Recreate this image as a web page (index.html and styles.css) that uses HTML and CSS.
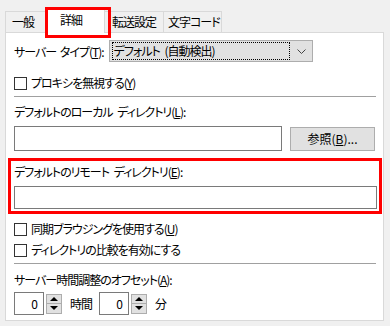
FILE: index.html
```html
<!DOCTYPE html>
<html lang="ja">
<head>
  <meta charset="UTF-8" />
  <title>詳細設定</title>
  <link rel="stylesheet" href="styles.css">
</head>
<body>
  <div class="tabs">
    <div class="tab tab-first">一般</div>
    <div class="tab tab-active">詳細</div>
    <div class="tab">転送設定</div>
    <div class="tab tab-code">文字コード</div>
  </div>

  <div class="panel">
    <div class="row row-type">
      <span class="label">サーバー タイプ(<u>T</u>):</span>
      <div class="select">
        <span class="select-text">デフォルト (自動検出)</span>
        <svg class="chevron" width="9" height="5" viewBox="0 0 9 5"><path d="M0.5 0.5 L4.5 4.5 L8.5 0.5" fill="none" stroke="#444" stroke-width="1"/></svg>
      </div>
    </div>

    <label class="check check-proxy"><span class="box"></span>プロキシを無視する(<u>Y</u>)</label>

    <div class="sep sep-first"></div>

    <div class="label line local-label">デフォルトのローカル ディレクトリ(<u>L</u>):</div>
    <div class="row row-local">
      <div class="input input-local"></div>
      <div class="button">参照(<u>B</u>)...</div>
    </div>

    <div class="marked">
      <div class="label line">デフォルトのリモート ディレクトリ(<u>E</u>):</div>
      <div class="input input-remote"></div>
    </div>

    <label class="check check-sync"><span class="box"></span>同期ブラウジングを使用する(<u>U</u>)</label>
    <label class="check check-compare"><span class="box"></span>ディレクトリの比較を有効にする</label>

    <div class="sep sep-second"></div>

    <div class="label line offset-label">サーバー時間調整のオフセット(<u>A</u>):</div>
    <div class="row row-offset">
      <div class="num">0</div>
      <div class="spin">
        <div class="spin-btn"><span class="tri-up"></span></div>
        <div class="spin-btn"><span class="tri-down"></span></div>
      </div>
      <span class="unit unit-hour">時間</span>
      <div class="num">0</div>
      <div class="spin">
        <div class="spin-btn"><span class="tri-up"></span></div>
        <div class="spin-btn"><span class="tri-down"></span></div>
      </div>
      <span class="unit">分</span>
    </div>
  </div>
</body>
</html>
```

FILE: styles.css
```css
body {
  margin: 0;
  background: #f0f0f0;
  font-family: "Noto Sans CJK JP", "Noto Sans", sans-serif;
  font-size: 12px;
  font-feature-settings: "palt";
  letter-spacing: -1px;
  word-spacing: 3px;
  color: #000;
  width: 390px;
  height: 326px;
  overflow: hidden;
}

u {
  text-decoration: underline;
  text-underline-offset: 1px;
}

/* tabs */
.tabs {
  display: flex;
  align-items: flex-end;
  height: 32px;
  padding-left: 5px;
  position: relative;
  z-index: 2;
}

.tab {
  height: 20px;
  line-height: 19px;
  padding: 0 7px 0 7px;
  border: 1px solid #d9d9d9;
  border-bottom: none;
  background: #f0f0f0;
  margin-left: -1px;
  white-space: nowrap;
}

.tab-first {
  margin-left: 0;
  width: 25px;
  padding: 0 8px 0 6px;
}

.tab-active {
  position: relative;
  height: 24px;
  line-height: 22px;
  margin-bottom: -1px;
  width: 26px;
  padding: 0 18px 0 14px;
  background: #fff;
  border-color: #d9d9d9;
}

.tab-code {
  width: 50px;
  padding: 0 3px 0 4px;
}

/* red annotation over the active tab */
.tab-active::after {
  content: "";
  position: absolute;
  left: -1px;
  top: -2px;
  width: 60px;
  height: 25px;
  border: 3px solid #ff0000;
}

.panel {
  margin: 0 6px 0 5px;
  height: 289px;
  background: #fff;
  border: 1px solid #d9d9d9;
  padding: 0 6px 0 8px;
  box-sizing: border-box;
  position: relative;
  z-index: 1;
}

.row {
  display: flex;
  align-items: center;
}

.line {
  height: 16px;
  line-height: 16px;
}

.row-type {
  margin-top: 7px;
  height: 22px;
}

.row-type .label {
  flex-shrink: 0;
  white-space: nowrap;
  word-spacing: 2px;
  margin-right: 5px;
}

.select {
  flex: 1;
  margin-right: 64px;
  height: 22px;
  box-sizing: border-box;
  border: 1px solid #adadad;
  background: #e1e1e1;
  display: flex;
  align-items: center;
  padding: 2px;
}

.select-text {
  flex: 1;
  height: 16px;
  line-height: 15px;
  border: 1px dotted #000;
  padding-left: 1px;
  margin-right: 7px;
  white-space: nowrap;
}

.chevron {
  margin-right: 4px;
}

/* checkboxes */
.check {
  display: flex;
  align-items: center;
  height: 16px;
  line-height: 16px;
}

.box {
  width: 11px;
  height: 11px;
  border: 1px solid #333;
  background: #fff;
  margin-right: 4px;
}

.check-proxy {
  margin-top: 13px;
}

.check-sync {
  margin-top: 7px;
}

.check-compare {
  margin-top: 5px;
}

.sep {
  height: 1px;
  background: #a0a0a0;
  margin-right: 1px;
}

.sep-first {
  margin-top: 5px;
}

.sep-second {
  margin-top: 5px;
}

.local-label {
  margin-top: 7px;
}

.row-local {
  margin-top: 6px;
  justify-content: space-between;
  align-items: flex-start;
}

.input {
  border: 1px solid #7a7a7a;
  background: #fff;
  box-sizing: border-box;
}

.input-local {
  width: 268px;
  height: 25px;
}

.button {
  width: 85px;
  height: 24px;
  margin-top: 1px;
  margin-right: 2px;
  box-sizing: border-box;
  border: 1px solid #adadad;
  background: #e1e1e1;
  text-align: center;
  line-height: 22px;
  letter-spacing: 0;
}

/* red annotation around the remote directory field */
.marked {
  margin: 7px -5px 0 -6px;
  border: 3px solid #ff0000;
  padding: 3px 2px 2px 3px;
}

.input-remote {
  margin-top: 6px;
  height: 23px;
}

.offset-label {
  margin-top: 8px;
}

.row-offset {
  margin-top: 4px;
  height: 23px;
}

.num {
  width: 30px;
  height: 23px;
  box-sizing: border-box;
  border: 1px solid #7a7a7a;
  text-align: right;
  line-height: 21px;
  padding-right: 5px;
  letter-spacing: 0;
}

.spin {
  margin-left: 2px;
  width: 16px;
  display: flex;
  flex-direction: column;
}

.spin-btn {
  height: 10px;
  box-sizing: border-box;
  border: 1px solid #adadad;
  background: #e1e1e1;
  display: flex;
  align-items: center;
  justify-content: center;
}

.spin-btn + .spin-btn {
  border-top: none;
}

.tri-up {
  width: 0;
  height: 0;
  border-left: 4px solid transparent;
  border-right: 4px solid transparent;
  border-bottom: 4px solid #000;
}

.tri-down {
  width: 0;
  height: 0;
  border-left: 4px solid transparent;
  border-right: 4px solid transparent;
  border-top: 4px solid #000;
}

.unit {
  margin-left: 8px;
}

.unit-hour {
  margin-right: 7px;
}
```
